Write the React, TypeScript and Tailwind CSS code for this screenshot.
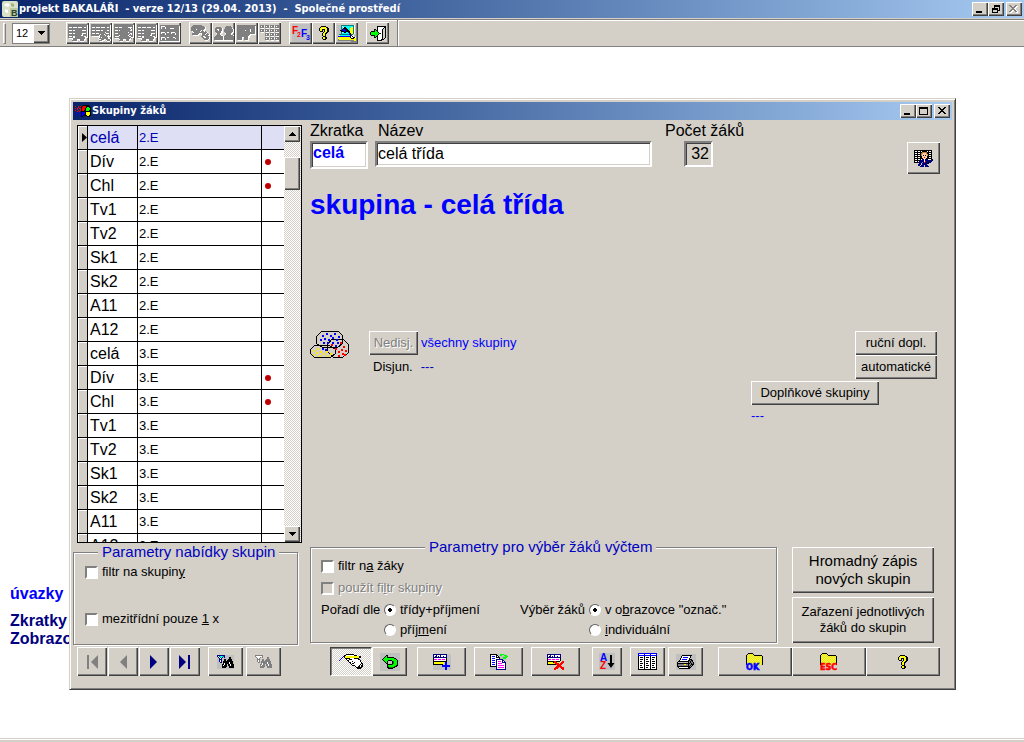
import React from 'react';

const RAISED =
  'bg-[#d4d0c8] shadow-[inset_1px_1px_0_#fff,inset_-1px_-1px_0_#404040,inset_-2px_-2px_0_#808080]';
const SUNKEN =
  'border-2 border-t-[#808080] border-l-[#808080] border-b-white border-r-white shadow-[inset_1px_1px_0_#404040,inset_-1px_-1px_0_#d4d0c8]';
const GROUP =
  'border border-[#808080] shadow-[1px_1px_0_#fff,inset_1px_1px_0_#fff]';

const PALETTE: Record<string, string> = {
  k: '#000000',
  w: '#ffffff',
  g: '#808080',
  s: '#c0c0c0',
  b: '#0000ff',
  n: '#000080',
  r: '#ff0000',
  y: '#ffff00',
  h: '#e0dc60',
  o: '#c08040',
  p: '#ffd0a0',
  e: '#00ff00',
  d: '#008000',
  m: '#ff00ff',
  c: '#00ffff',
  t: '#008080',
};

function Pixels({ rows, className }: { rows: string[]; className?: string }) {
  const width = Math.max(...rows.map((r) => r.length));
  const cells: React.ReactNode[] = [];
  rows.forEach((row, y) => {
    let x = 0;
    while (x < row.length) {
      const ch = row[x];
      let end = x + 1;
      while (end < row.length && row[end] === ch) end++;
      if (PALETTE[ch]) {
        cells.push(<rect key={`${x}-${y}`} x={x} y={y} width={end - x} height={1} fill={PALETTE[ch]} />);
      }
      x = end;
    }
  });
  return (
    <svg width={width} height={rows.length} shapeRendering="crispEdges" aria-hidden="true" className={className}>
      {cells}
    </svg>
  );
}

const DISABLED_SHEET_A = [
  'ggggggggggggggggggg.', 'gggggggggggggggggggw', 'gggggggggggggggggggw', 'gwwwgwwwwgwwwwggwwgw',
  'gggggggggggggggggggw', 'gggggggggggggggggggw', 'gwwwgwwgggggggwwwwgw', 'gggggggggggggggggggw',
  'gggggggggggggggggggw', 'gwwwgwwgggggggwwwwgw', 'ggggggggggggggwggggw', 'gggggggggggggwwggggw',
  'gwwwgwwgggggggggwwgw', 'gggggwwggggggggggwww', '.wwwwggggggggggggw..', '....wggggwwwggggww..',
  '....gggggw.wggggw...', '.....wwwww..wwww....',
];
const DISABLED_SHEET_B = [
  'ggggggggggggggggggg.', 'gggggggggggggggggggw', 'gggggggggggggggggggw', 'gwwwgwwwwgwwwwggwwgw',
  'gggggggggggggggggggw', 'gggggggggggggggggggw', 'gwwwgwwwwgwwggggwwgw', 'gggggggggggggggggggw',
  'ggggggggggggggwggggw', 'gwwwgwwwgggggggwwwgw', 'gggggggggwgggwgggggw', 'ggggggggwgggggwggwgw',
  '.wwwwwwwwgggggggwwww', '........wgwggggggw..', '.......wgggggggggww.', '........wwgggwwggggw',
  '........gggwww.wgggw', '.........www....www.',
];
const DISABLED_SHEET_C = [
  'ggggggggggggggggggg.', 'gggggggggggggggggggw', 'gggggggggggggggggggw', 'gwwwgwwwggggggwwwwgw',
  'ggggggggggggggggwggw', 'gggggggggggggggggwgw', 'gwwwgwggggggggggwwgw', 'gggggggggggggggggggw',
  'ggggggggggggggwggggw', 'gwwwggggggggggggwwgw', 'gggggggggggggggwgwgw', 'gggggwggggggggwggggw',
  'gwwwwggggggggggwwggw', 'gggggggggggggggggwww', '.wwwwgggggggggggwg..', '.....wgggwwwgggww...',
  '.....ggggw.wgggw....', '......www...www.....',
];
const DISABLED_FLOW = [
  'ggggggggggggggggggg.', 'gwwwwggggggggggggggw', 'gwgggwgggggggggggggw', 'gwgggwggggwwwwgggggw',
  'gggggggggggggggggggw', 'gggggggggggggggggggw', 'gggggggggggggggggggw', 'gwwwwggwwggwwwwggggw',
  'gwgggwgggggwgggwgggw', 'gggggwgggggggggwgggw', 'gggggggggggggggggggw', 'gggggggggggggggggggw',
  'gwwwwggwwggggwwggggw', 'gwgggwgggggggggwgggw', 'gwgggwgggggggggggggw', 'gggggggggggggggggggw',
  '.wwwwwwwwwwwwwwwwwww',
];
const DISABLED_HAND = [
  '..ggggggggg........', '.gggggggggggg......', 'ggggggggggggggw....', 'ggggggggggggggw....',
  'gggggwgggggggww....', 'ggggggggggwgww.....', '.wgggggggwgggwg....', '..wgggggggggggggw..',
  '.gggggggwwwggggwg..', '.ggggggww.wgggwgggw', '..wwwwww...ggggggww', '..........ggwwgggg.',
  '...........ggwwgggw', '............ggggggw', '.............ggggw.', '..............www..',
];
const DISABLED_PEOPLE = [
  '............ggggg..', '..ggggg....ggggggg.', '.gggggggw..gggggggw', '.ggwwgggw.gggggggggw',
  '.gggwgggw.gggggggggw', '.ggggggww.gggggggggw', '..gggggww..gggggggww', '..wgggww...wgggggww',
  '...gggw.....gggggw.', '..gggggww..ggggggggw', '.ggggggggwggggggggg', 'gggggggggwggggggggg',
  'gggggggggwggggggggg', 'gggggggggwggggggggg', '.wwwwwwwwwwwwwwwwww',
];
const DISABLED_BOARD = [
  'ggggggggggggggggggg', 'ggggggggggggggggggw', 'ggggggggggggggggggw', 'ggggggggggggggggggw',
  'gggggggggggggwggggw', 'ggggggggwggggwggggw', 'gggggggggggggwggggw', 'ggggggggggggggggggw',
  'ggggggggggggggggggw', 'gggggggggggggwwwwww', 'ggggggggggggww.....', 'gggggggggggww......',
  'gggggwwggggww......', 'gggggw.ggggw.......', 'gggggw.ggggw.......', '.wwwww..wwww.......',
];
const DISABLED_GRID = [
  'gggg.gggg.gggg.gggg', 'gwggwgwggwgwggwgwgg', 'gggg.gggg.gggg.gggg', '.www..www..www..www',
  'gggg.gggg.gggg.gggg', 'gwggwgwggwgwggwgwgg', 'gggg.gggg.gggg.gggg', '.www..www..www..www',
  '.....gggg.gggg.gggg', '.....gwggwgwggwgwgg', '.....gggg.gggg.gggg', '......www..www..www',
  '.....gggg.gggg.gggg', '.....gwggwgwggwgwgg', '.....gggg.gggg.gggg', '......www..www..www',
];
const HELP = [
  '..kkkkk...', '.kyyyyykk.', 'kyywyyyykk', 'kyykkkyykk', 'kyyk.kyykk', '.kkk.kyykk', '....kyykk.',
  '...kyykk..', '...kyyk...', '...kyyk...', '....kkk...', '...kyykk..', '...kyykk..', '....kkk...',
];
const WIZARD = [
  'sssstttttttttttttws', 'sssstwcccccccccctws', 'sssstcwkkcccccyytws', 'sssstckkkkcccyyytws',
  'sssstkbbkkkccyyytws', 'ssskkbbbbkkkcyyytws', 'sssskkkbkkkkkyyytws', 'sssstwckkccbkyyytws',
  'sssstcccccccbkyytws', 'ssttttttttttbkttsss', 'sswcccccccccckbwwss', 'sbbbbbbbbbbbbkwkwss',
  'syyyyyyyyyyyykwwkkw', 'swyyyyyyyyyyyykkkyy', 'sgyyyyyyyyyyyyyyyyy', 'sggggggggggggggggyy',
  'ssssssssssssssggggg',
];
const EXIT = [
  '.......kkkkkkkkk', '.......kwwwwwwkk', '.......kwwwwwk.k', '....kk.kwwwwk..k', '....kekkwwwwk..k',
  '.kkkkeekwwwwk..k', 'keeeeeeekwwwk..k', 'keeeeeeeekkwk..k', 'keeeeeeekwwwk..k', '.kkkkeekwwwwk..k',
  '....kekkwwwwk..k', '....kk.kwwwwk..k', '.......kwwwwk.k.', '.......kwwwkkk..', '.......kkkkk....',
];
const TEACHER = [
  'kkkkkkkkkkkkkkkkkk.', 'kwwkwwkwkkkkkwkwwk.', 'kkkkkkkkoooookkkkk.', 'kwwkwwkoopppokkwwk.',
  'kkkkkkkopppppokkkk.', 'kwwkwwkopkpkpokwwk.', 'kkkkkkkkpppppkkkkk.', 'kwwkwwkkpprppkkwwk.',
  'kkkkkkkkkpppkkkkkk.', 'kwwkwwkwnnwnnkwwwkn', 'kkkkkknnnnwnnnnknnn', 'kwwkwnnnnnwrnnnnnn.',
  'kkkkknnngnrnnnknn..', '.....nn.nnnnnkn....', '....nnn.nnnnn......', '....nn.nnn.nnn.....',
  '......nnnn.nnnn....',
];
const FUNNEL = [
  'nnnnnnnnsssssssss', 'nwtccctnsssssssss', 'snwtcnsnsssskksss', 'ssnwnssssssskksss',
  'ssnnnsskksskkkkss', 'ssnwnsskkskkkkkss', 'ssnwnskkkkkkkkkks', 'sssnnskkkkkkwkkks',
  'sssssskwkkkkwkkks', 'ssssskkwkkskkwkkk', 'ssssskwkkkskkwkkk', 'ssssskkkkksskkkkk',
  'ssssskkkkssskkkkk', 'sssssssssssssssss',
];
const FUNNEL_OFF = FUNNEL.map((r) =>
  r.replace(/[tc]/g, 'w').replace(/s/g, '.').replace(/[nk]/g, 'g'),
);
const UNDO = [
  '....................', '....................', '......kk............', '.....kek............',
  '....keekkkkkkk......', '...keeeeeeeeeekk....', '..keeeeeeeeeeeeek...', '...keeeekkkkeeeeek..',
  '....keek....kdeeek..', '.....kek....kdeeek..', '......kk....kdeeek..', '.......kkkkkdeeeek..',
  '.......keeeeeeeekk..', '.......kdeeeeedkk...', '.......kkddddkk.....', '........kkkkk.......',
  '....................', '....................',
].map((r) => r.replace(/\./g, 's'));
const RECORDS = [
  'nnnnnnnnnnnnnn', 'nwwnwwwnwwwwwn', 'nwnnwnwnwwnwwn', 'nnnnnnnnnnnnnn', 'kwwwwwwwwwwwwk', 'kmmmwmmmwmmmwk', 'kwwwwwwwwwwwwk',
];
const ADD_RECORD = [
  ...RECORDS.map((r) => `.${r}ssss`), '.kkkkkkkkkkkkkkssss', '.kyyyyyyyyyysbbssss', '.kyyyyyyyyyysbbssss', '.kkkkkkkkkkssbbssss',
  '.sssssssssbbbbbbbbs', '.sssssssssbbbbbbbbs', '.ssssssssssssbbssss', '.ssssssssssssbbssss', '.ssssssssssssbbssss',
];
const DELETE_RECORD = [
  ...RECORDS.map((r) => `${r}....`), 'kkkkkkkrrkkkk..rr.', 'kyyyyykrrryy..rrr.', 'kyyyyyyyrrrr.rrr..', 'kkkkkkkkkrrrrrr...',
  '..........rrrr....', '.........rrrrrr...', '........rrrr.rrrr.', '.......rrrr...rrr.', '.......rr......rr.',
];
const COPY = [
  'kkkkkkkssseeeess.', 'kwwwwwkksseesseee', 'kwbbbwkwksssssseee', 'kwwwwwkkkkssseeee', 'kwbbbwwwwkssseee.',
  'kwwwwwnnnnnnnsss.', 'kwbbbwnwwwwwnnss.', 'kwwwwwnwmmmwnwns.', 'kwbbbwnwwwwwnnnn.', 'kwwwwwnwmmmmwwwn.',
  'kwbbbwnwwwwwwwwn.', 'kwwwwwnwmmmmmmwn.', 'kkkkkknwwwwwwwwn.', 'ssssssnwmmmmmmwn.', 'ssssssnwwwwwwwwn.', 'ssssssnnnnnnnnnn.',
];
const TABLE_ICON = [
  'bbbbbbbbbbbbbbbbbbb', 'bwwwwwbwwwwwbwwwwwb', 'bbbbbbbbbbbbbbbbbbb', 'kwwwwwkwwwwwkwwwwwk', 'kwkkkwkwkkkwkwkkkwk',
  'kwwwwwkwwwwwkwwwwwk', 'kwkkkwkwkkwwkwkkwwk', 'kwwwwwkwwwwwkwwwwwk', 'kwkkwwkwkkkwkwkkkwk', 'kwwwwwkwwwwwkwwwwwk',
  'kwkkkwkwkkwwkwkkkwk', 'kwwwwwkwwwwwkwwwwwk', 'kwkkwwkwkkkwkwkkwwk', 'kwwwwwkwwwwwkwwwwwk', 'kwkkkwkwkkwwkwkkkwk',
  'kwwwwwkwwwwwkwwwwwk', 'kkkkkkkkkkkkkkkkkkk',
];
const PRINTER = [
  'ssssssssssssssssssss', 'sssssskkkkkkkkkkssss', 'ssssskwwwwwwwwksssss', 'ssssskwbbbbbwwksssss', 'sssskwwwwwwwwkssssss',
  'sssskwbbbbbwwkkkssss', 'ssskwwwwwwwwkkgkksss', 'sskkkkkkkkkkkgkgksss', 'sksssssssssskgkggkss', 'skkkkkkkkkkkkkgkgkss',
  'skggggggyyggkggkkkss', 'skggggggggggkgkgksss', 'skkkkkkkkkkkkkgkssss', 'sskwwwwwwwwwkkksssss', 'ssskkkkkkkkkkkssssss',
  'ssssssssssssssssssss',
];
const WRITE_HAND = [
  '.......kkkkkkkk.........', '.....kkwwwwwwwwkkk......', '....bkyyyyyyyyyyyyyykk..', '...b.kyyyyyyyyyyyyyykk..',
  '..b...kkkkkwwwwkkkkk....', '.b.....kwwkkkwwwwwwkk...', 'b.......kkwwwwwwwwwwwk..', '.........kwwwkwwwwwwwk..',
  '..........kkwwwkwwwwwwk.', '...........kwkkwwwwwwwkk', '............kwwwwwwwwkwk', '.............kkkwwwwkwkk',
  '................kwwkkwkk', '.................kkkkkk.', '..................kkkk..',
];
const FOLDER = [
  '..kkkkk..........', '.kyhyhyk.........', 'kyhyhyhykkkkkkkk.', 'khyhyhyhyhyhyhyhk', 'kyhyhyhyhyhyhyhyk', 'khyhyhyhyhyhyhyhk',
  'kyhyhyhyhyhyhyhyk', 'khyhyhyhyhyhyhyhk', 'kyhyhyhyhyhyhyhyk', 'khyhyhyhyhyhyhyhk', 'kyhyhyhyhyhyhyhyk', 'khyhyhyhyhyhyhyhk',
];
const WINDOWS_FLAG = [
  '........kkkkkk..', 'r..r.rkkrrrkkkk.', '...r..krrrrkeekk', 'r.r.rrkrrrkeeeek', '..r..rkrrrkeeeek', 'r..r.rkrrkkeeekk',
  '..r.r.kkkkkkkkkk', 'b..b.bkbbbkyyyyk', '..b..bkbbbkyyyyk', 'b..b.bkbbkkyyyyk', '..b..bkbkkkkyykk', '.....bkk....kkk.',
];
const CAPTION: Record<string, string[]> = {
  min: ['.......', '.......', '.......', '.......', '.......', '.......', 'kkkkkk.', 'kkkkkk.'],
  max: ['kkkkkkkkk', 'kkkkkkkkk', 'k.......k', 'k.......k', 'k.......k', 'k.......k', 'k.......k', 'kkkkkkkkk'],
  restore: ['..kkkkkk', '..kkkkkk', '..k....k', 'kkkkkk.k', 'kkkkkk.k', 'k....kkk', 'k....k..', 'kkkkkk..'],
  close: ['kk....kk', '.kk..kk.', '..kkkk..', '...kk...', '..kkkk..', '.kk..kk.', 'kk....kk'],
  closeOff: ['gg....gg.', '.gg..ggww', '..ggggww.', '...ggww..', '..ggggw..', '.ggwwggw.', 'ggww..ggw', '.ww....ww'],
};

function CaptionButtons({ middle, close }: { middle: string; close: string }) {
  const base = `flex h-[14px] w-4 items-center justify-center pr-px pb-px ${RAISED}`;
  return (
    <div className="ml-auto flex pr-0.5">
      <button type="button" aria-label="Minimalizovat" className={base}><Pixels rows={CAPTION.min} /></button>
      <button type="button" aria-label="Velikost okna" className={base}><Pixels rows={CAPTION[middle]} /></button>
      <button type="button" aria-label="Zavřít" className={`${base} ml-0.5`}><Pixels rows={CAPTION[close]} /></button>
    </div>
  );
}

function ToolButton({ label, rows, children, disabled }: { label: string; rows?: string[]; children?: React.ReactNode; disabled?: boolean }) {
  return (
    <button type="button" aria-label={label} disabled={disabled} className={`flex h-[22px] w-[23px] items-center justify-center ${RAISED}`}>
      {rows ? <Pixels rows={rows} /> : children}
    </button>
  );
}

function BarButton({ label, width, children, disabled }: { label: string; width: string; children: React.ReactNode; disabled?: boolean }) {
  return (
    <button type="button" aria-label={label} disabled={disabled} className={`flex h-[29px] items-center justify-center ${width} ${RAISED}`}>
      {children}
    </button>
  );
}

function TextButton({ children, className = '', disabled }: { children: React.ReactNode; className?: string; disabled?: boolean }) {
  return (
    <button type="button" disabled={disabled} className={`${RAISED} text-center ${className}`}>
      {children}
    </button>
  );
}

const CHECK =
  'size-[13px] shrink-0 appearance-none border-2 border-t-[#808080] border-l-[#808080] border-b-white border-r-white bg-white disabled:bg-[#d4d0c8]';
const RADIO =
  'size-3 shrink-0 appearance-none rounded-full border border-t-[#606060] border-l-[#606060] border-b-white border-r-white bg-white checked:bg-[radial-gradient(circle,#000_2px,#fff_2px)]';

const names = ['celá', 'Dív', 'Chl', 'Tv1', 'Tv2', 'Sk1', 'Sk2', 'A11', 'A12'];
const groups = ['2.E', '3.E'].flatMap((cls) =>
  names.map((name) => ({ name, cls, marked: name === 'Dív' || name === 'Chl' })),
);

function GroupList() {
  return (
    <div className="ml-1 flex h-[418px] overflow-hidden border border-black bg-white">
      <table className="flex-1 table-fixed border-separate border-spacing-0 self-start text-left">
        <tbody>
          {groups.map((g, i) => (
            <tr key={g.cls + g.name} className={`h-6 ${i === 0 ? 'bg-[#dedef5] text-[#0000b0]' : 'text-black'}`}>
              <td className="w-[10px] border-r border-b border-black bg-[#d4d0c8] p-0 shadow-[inset_1px_1px_0_#fff]">
                {i === 0 && (
                  <svg width="5" height="9" className="ml-1" aria-hidden="true"><path d="M0 0v9l5-4.500z" /></svg>
                )}
              </td>
              <td className="w-[50px] border-r border-b border-black p-0 pl-0.5 text-base leading-[22px]">{g.name}</td>
              <td className="w-[124px] border-r border-b border-black p-0 pl-px text-[13px] leading-[22px]">{g.cls}</td>
              <td className="w-[22px] border-b border-black p-0">
                {g.marked && <span className="ml-[3px] block size-1.5 rounded-full bg-[#c00000]" />}
              </td>
            </tr>
          ))}
        </tbody>
      </table>
      <div className="flex w-[17px] flex-col bg-[repeating-conic-gradient(#fff_0_25%,#d4d0c8_0_50%)] bg-[length:2px_2px] pr-px">
        <button type="button" aria-label="Nahoru" className={`flex h-4 items-center justify-center ${RAISED}`}>
          <Pixels rows={['...k...', '..kkk..', '.kkkkk.', 'kkkkkkk']} />
        </button>
        <div className={`mt-[15px] h-[33px] ${RAISED}`} />
        <button type="button" aria-label="Dolů" className={`mt-auto flex h-4 items-center justify-center ${RAISED}`}>
          <Pixels rows={['kkkkkkk', '.kkkkk.', '..kkk..', '...k...']} />
        </button>
      </div>
    </div>
  );
}

function GroupsIcon() {
  const dots = (pts: number[][], fill: string) =>
    pts.map(([x, y]) => <rect key={`${x},${y}`} x={x} y={y} width="2" height="2" fill={fill} />);
  return (
    <svg width="40" height="29" shapeRendering="crispEdges" aria-hidden="true">
      <g fill="none" stroke="#000">
        <path d="M11.500 0.500h17l4 4v8l-5 4h-15l-6-4v-7z" />
        <path d="M4.500 14.500h15l6 4v4l-5 4h-16l-4-4v-4z" />
        <path d="M21.500 8.500h12l5 5v8l-6 5h-9l-6-6v-7z" />
      </g>
      {dots([[12, 4], [16, 2], [20, 4], [24, 2], [28, 5], [10, 8], [14, 7], [18, 8], [22, 6], [26, 8], [13, 11], [17, 11], [22, 11], [27, 11], [25, 14], [12, 17], [15, 18]], '#0000ff')}
      {dots([[3, 19], [7, 17], [6, 21], [10, 20], [3, 23], [9, 24], [13, 22], [17, 24], [16, 20], [20, 22]], '#ffe800')}
      {dots([[21, 13], [25, 17], [30, 11], [33, 15], [28, 20], [31, 18], [35, 19], [28, 24], [32, 22], [34, 23]], '#ff0000')}
    </svg>
  );
}

function FolderIcon({ label, fill }: { label: string; fill: string }) {
  return (
    <span className="relative block h-[18px] w-5">
      <Pixels rows={FOLDER} className="ml-px" />
      <svg width="26" height="11" className="absolute top-[8px] left-0" aria-hidden="true">
        <text x="1" y="9" fill={fill} stroke={fill} strokeWidth="0.5" className="font-['DejaVu_Sans_Condensed','DejaVu_Sans'] text-[9px] font-bold">
          {label}
        </text>
      </svg>
    </span>
  );
}

function NavIcon({ flip, bar, fill }: { flip?: boolean; bar?: boolean; fill: string }) {
  return (
    <svg width="12" height="14" fill={fill} className={flip ? '-scale-x-100' : ''} aria-hidden="true">
      <path d={bar ? 'M0 0v14l7-7z' : 'M2 0v14l7-7z'} />
      {bar && <path d="M9 0h2v14H9z" />}
    </svg>
  );
}

function GroupWindow() {
  return (
    <section className="relative mt-[51px] mr-[68px] ml-[69px] min-w-[887px] border border-t-[#d4d0c8] border-l-[#d4d0c8] border-r-[#404040] border-b-[#404040] bg-[#d4d0c8] p-[3px] shadow-[inset_1px_1px_0_#fff,inset_-1px_-1px_0_#808080]">
      <header className="flex h-[18px] items-center bg-linear-to-r from-[#0a246a] to-[#a6caf0] pl-0.5">
        <Pixels rows={WINDOWS_FLAG} />
        <h2 className="ml-px font-['DejaVu_Sans_Condensed','DejaVu_Sans'] text-[11px] leading-[18px] font-bold text-white">Skupiny žáků</h2>
        <CaptionButtons middle="max" close="close" />
      </header>

      <div className="flex">
        <div className="w-[229px] shrink-0 pt-[5px]">
          <GroupList />
          <fieldset className={`mr-1 h-[102px] pl-[11px] text-[13px] ${GROUP}`}>
            <legend className="ml-[13px] bg-[#d4d0c8] px-1 text-[15px] leading-[18px] whitespace-nowrap text-[#0000c0]">Parametry nabídky skupin</legend>
            <label className="flex h-[22px] items-center gap-1">
              <input type="checkbox" className={CHECK} />
              <span>filtr na skupin<u>y</u></span>
            </label>
            <label className="mt-[25px] flex h-[22px] items-center gap-1">
              <input type="checkbox" className={CHECK} />
              <span>mezitřídní pouze <u>1</u> x</span>
            </label>
          </fieldset>
        </div>

        <div className="flex flex-1 flex-col pr-3 pb-0.5 pl-2">
          <div className="flex items-start pt-px">
            <label className="w-[58px] text-base leading-5">
              Zkratka
              <input defaultValue="celá" className={`block h-7 w-full bg-white px-px pb-1 font-bold text-[#0000ff] outline-none ${SUNKEN}`} />
            </label>
            <label className="ml-[7px] w-[277px] text-base leading-5">
              <span className="ml-[3px]">Název</span>
              <input defaultValue="celá třída" className={`block h-[26px] w-full bg-white px-px outline-none ${SUNKEN}`} />
            </label>
            <label className="ml-[13px] text-base leading-5">
              Počet žáků
              <input readOnly value="32" className={`ml-[19px] block h-[26px] w-[29px] bg-[#d4d0c8] pr-0.5 text-right outline-none ${SUNKEN}`} />
            </label>
            <button type="button" aria-label="Rozvrh učitele" className={`mt-[21px] ml-auto flex h-8 w-[33px] items-center justify-center ${RAISED}`}>
              <Pixels rows={TEACHER} />
            </button>
          </div>

          <h1 className="mt-[15px] text-[28px] leading-8 font-bold text-[#0000ff]">skupina - celá třída</h1>

          <div className="mt-[110px] flex items-start text-[13px]">
            <GroupsIcon />
            <div className="ml-[19px]">
              <div className="flex h-6 items-center gap-[3px]">
                <TextButton disabled className="h-6 w-[49px] text-[#808080] [text-shadow:1px_1px_0_#fff]">Nedisj.</TextButton>
                <span className="text-[#0000ff]">všechny skupiny</span>
              </div>
              <div className="flex h-6 items-center gap-2 pl-1">
                <span>Disjun.</span>
                <span className="text-[#0000c0]">---</span>
              </div>
            </div>
            <div className="ml-auto flex w-[189px] flex-col items-start pr-[3px]">
              <div className="flex w-[82px] flex-col self-end">
                <TextButton className="h-6">ruční dopl.</TextButton>
                <TextButton className="h-6">automatické</TextButton>
              </div>
              <TextButton className="mt-0.5 h-6 w-32">Doplňkové skupiny</TextButton>
              <span className="mt-px text-[#0000ff]">---</span>
            </div>
          </div>

          <div className="mt-auto flex items-end justify-between pr-1.5">
            <fieldset className={`w-[467px] pb-0.5 pl-[10px] text-[13px] ${GROUP}`}>
              <legend className="ml-[104px] bg-[#d4d0c8] px-1 text-[15px] leading-4 text-[#0000c0]">Parametry pro výběr žáků výčtem</legend>
              <label className="flex h-[22px] items-center gap-1">
                <input type="checkbox" className={CHECK} />
                <span>filtr n<u>a</u> žáky</span>
              </label>
              <label className="flex h-[22px] items-center gap-1 text-[#808080] [text-shadow:1px_1px_0_#fff]">
                <input type="checkbox" disabled className={CHECK} />
                <span>použít fi<u>l</u>tr skupiny</span>
              </label>
              <div className="flex">
                <span className="w-[63px] leading-[21px]">Pořadí dle</span>
                <div className="w-[136px]">
                  <label className="flex h-[21px] items-center gap-1"><input type="radio" name="order" defaultChecked className={RADIO} /><span>třídy+pří<u>j</u>mení</span></label>
                  <label className="flex h-5 items-center gap-1"><input type="radio" name="order" className={RADIO} /><span>příj<u>m</u>ení</span></label>
                </div>
                <span className="w-[69px] leading-[21px]">Výběr žáků</span>
                <div>
                  <label className="flex h-[21px] items-center gap-1"><input type="radio" name="pick" defaultChecked className={RADIO} /><span>v o<u>b</u>razovce "označ."</span></label>
                  <label className="flex h-5 items-center gap-1"><input type="radio" name="pick" className={RADIO} /><span><u>i</u>ndividuální</span></label>
                </div>
              </div>
            </fieldset>
            <div className="flex w-[142px] flex-col gap-1">
              <TextButton className="h-[46px] text-[15px] leading-[18px]">Hromadný zápis<br />nových skupin</TextButton>
              <TextButton className="h-[46px] text-[13px] leading-4">Zařazení jednotlivých<br />žáků do skupin</TextButton>
            </div>
          </div>
        </div>
      </div>

      <div className="mt-0.5 flex pr-3 pb-[10px] pl-1">
        <div className="flex gap-px">
          <BarButton label="První" width="w-[30px]" disabled><NavIcon flip bar fill="#808080" /></BarButton>
          <BarButton label="Předchozí" width="w-[30px]" disabled><NavIcon flip fill="#808080" /></BarButton>
          <BarButton label="Další" width="w-[30px]"><NavIcon fill="#000080" /></BarButton>
          <BarButton label="Poslední" width="w-[30px]"><NavIcon bar fill="#000080" /></BarButton>
        </div>
        <div className="ml-2 flex gap-[3px]">
          <BarButton label="Hledat" width="w-[35px]"><Pixels rows={FUNNEL} /></BarButton>
          <BarButton label="Hledat další" width="w-[35px]" disabled><Pixels rows={FUNNEL_OFF} /></BarButton>
        </div>
        <div className="ml-[49px] flex">
          <button type="button" aria-label="Opravy" className="flex h-[29px] w-[42px] items-center justify-center border border-t-[#404040] border-l-[#404040] border-r-white border-b-white bg-[repeating-conic-gradient(#fff_0_25%,#d4d0c8_0_50%)] bg-[length:2px_2px] shadow-[inset_1px_1px_0_#808080]">
            <Pixels rows={WRITE_HAND} />
          </button>
          <BarButton label="Zpět" width="w-[35px]"><Pixels rows={UNDO} /></BarButton>
        </div>
        <div className="ml-[10px] flex gap-2">
          <BarButton label="Přidat" width="w-[49px]"><Pixels rows={ADD_RECORD} /></BarButton>
          <BarButton label="Kopírovat" width="w-[49px]"><Pixels rows={COPY} /></BarButton>
          <BarButton label="Zrušit" width="w-[49px]"><Pixels rows={DELETE_RECORD} /></BarButton>
        </div>
        <div className="ml-3 flex">
          <BarButton label="Seřadit" width="w-[30px]">
            <svg width="16" height="17" aria-hidden="true" className="bg-[#c0c0c0] font-['Liberation_Sans'] text-[10px] font-bold">
              <text x="1" y="8" fill="#0000ff">A</text>
              <text x="1" y="16" fill="#ff0000">Z</text>
              <path d="M11 2h2v8h2.500L12 15 8.500 10H11z" />
            </svg>
          </BarButton>
        </div>
        <div className="ml-2 flex gap-[3px]">
          <BarButton label="Tabulka" width="w-[35px]"><Pixels rows={TABLE_ICON} /></BarButton>
          <BarButton label="Tisk" width="w-[35px]"><Pixels rows={PRINTER} /></BarButton>
        </div>
        <div className="ml-auto flex">
          <BarButton label="OK" width="w-[74px]"><FolderIcon label="OK" fill="#0000ff" /></BarButton>
          <BarButton label="Esc" width="w-[74px]"><FolderIcon label="ESC" fill="#ff0000" /></BarButton>
          <BarButton label="Nápověda" width="w-[74px]"><Pixels rows={HELP} /></BarButton>
        </div>
      </div>
    </section>
  );
}

export default function App() {
  return (
    <div className="flex min-h-screen flex-col bg-white font-['Liberation_Sans',Arial,sans-serif] text-black">
      <header className="flex h-[18px] items-center bg-linear-to-r from-[#0a246a] to-[#a6caf0] pl-0.5">
        <svg width="16" height="16" aria-hidden="true">
          <rect width="16" height="16" rx="2" fill="#d8e0c8" />
          <path d="M2 3l4-1 2 2-2 2-3-1zM3 8l3 1v3l-3-1z" fill="#fff" />
          <path d="M9 2l3 1v3l-3-1z" fill="#a0b080" />
          <rect x="8" y="7" width="8" height="9" fill="#b8c8a0" />
          <text x="9" y="15" className="font-['Liberation_Sans'] text-[9px] font-bold" fill="#304030">B</text>
        </svg>
        <h1 className="ml-px font-['DejaVu_Sans_Condensed','DejaVu_Sans'] text-[11px] leading-[18px] font-bold whitespace-pre text-white">
          {'projekt BAKALÁŘI  - verze 12/13 (29.04. 2013)  -  Společné prostředí'}
        </h1>
        <CaptionButtons middle="restore" close="closeOff" />
      </header>

      <div className="flex h-[29px] border-b border-[#808080] bg-[#d4d0c8] pt-px">
        <div className="flex flex-1 items-center border-t border-[#808080] pl-[3px] shadow-[inset_0_1px_0_#fff]">
          <span className="h-[21px] w-[3px] border border-t-white border-l-white border-r-[#808080] border-b-[#808080]" />
          <div className="relative ml-[6px]">
            <select aria-label="Velikost písma" defaultValue="12" className="block h-[21px] w-[38px] appearance-none border border-[#808080] bg-white pl-[3px] text-[11px] outline-none">
              <option>12</option>
            </select>
            <span className={`pointer-events-none absolute top-px right-px flex h-[19px] w-4 items-center justify-center ${RAISED}`}>
              <Pixels rows={['kkkkkkk', '.kkkkk.', '..kkk..', '...k...']} />
            </span>
          </div>
          <div className="ml-4 flex">
            <ToolButton label="Třídy" rows={DISABLED_SHEET_A} disabled />
            <ToolButton label="Žáci" rows={DISABLED_SHEET_B} disabled />
            <ToolButton label="Učitelé" rows={DISABLED_SHEET_C} disabled />
            <ToolButton label="Předměty" rows={DISABLED_SHEET_A} disabled />
            <ToolButton label="Vazby" rows={DISABLED_FLOW} disabled />
          </div>
          <div className="ml-2 flex">
            <ToolButton label="Výběr" rows={DISABLED_HAND} disabled />
            <ToolButton label="Osoby" rows={DISABLED_PEOPLE} disabled />
            <ToolButton label="Tabule" rows={DISABLED_BOARD} disabled />
            <ToolButton label="Rozvrh" rows={DISABLED_GRID} disabled />
          </div>
          <div className="ml-2 flex">
            <ToolButton label="Klávesy">
              <svg width="18" height="18" aria-hidden="true" className="bg-[#c0c0c0] font-['Liberation_Sans'] font-bold">
                <text x="0" y="10" className="text-[10px]" fill="#ff0000">F</text>
                <text x="5" y="13" className="text-[7px]" fill="#ff0000">2</text>
                <text x="9" y="13" className="text-[10px]" fill="#0000ff">F</text>
                <text x="14" y="16" className="text-[7px]" fill="#0000ff">3</text>
              </svg>
            </ToolButton>
            <ToolButton label="Nápověda" rows={HELP} />
            <ToolButton label="Průvodce" rows={WIZARD} />
          </div>
          <div className="ml-2 flex">
            <ToolButton label="Konec" rows={EXIT} />
          </div>
          <span className="ml-2 h-full w-0.5 border-r border-l border-l-[#808080] border-r-white" />
        </div>
      </div>

      <main className="relative flex-1">
        <div className="absolute top-[538px] left-[10px] text-base leading-[18px] font-bold text-[#000080]">
          <p className="text-[#0000ff]">úvazky</p>
          <p className="mt-[9px]">Zkratky</p>
          <p>Zobrazo</p>
        </div>
        <GroupWindow />
      </main>

      <footer className="flex h-1 flex-col justify-between">
        <span className="h-px bg-[#d4d0c8]" />
        <span className="h-0.5 bg-[#d4d0c8]" />
      </footer>
    </div>
  );
}
